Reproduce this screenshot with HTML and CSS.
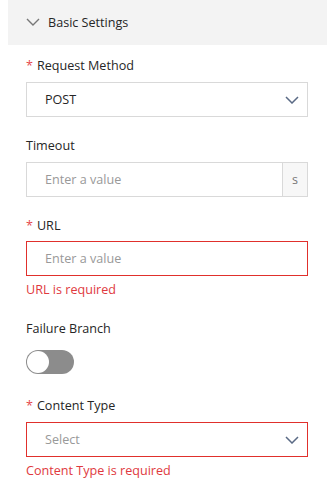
FILE: index.html
```html
<!DOCTYPE html>
<html lang="en">
<head>
    <meta charset="UTF-8">
    <meta name="viewport" content="width=device-width, initial-scale=1.0">
    <title>Basic Settings</title>
    <link rel="stylesheet" href="styles.css">
</head>
<body>
<div class="panel">
    <div class="panel-header">
        <svg class="collapse-icon" width="14" height="8" viewBox="0 0 14 8"><path d="M1 1 L7 7 L13 1" fill="none" stroke="#777" stroke-width="1.4"/></svg>
        <span>Basic Settings</span>
    </div>
    <div class="panel-body">
        <div class="form-item">
            <label class="form-label"><span class="required">*</span>Request Method</label>
            <div class="select">
                <span class="value">POST</span>
                <svg class="arrow" width="14" height="8" viewBox="0 0 14 8"><path d="M1 1 L7 7 L13 1" fill="none" stroke="#5a6a85" stroke-width="1.5"/></svg>
            </div>
        </div>
        <div class="form-item">
            <label class="form-label">Timeout</label>
            <div class="input-group">
                <input class="input" type="text" placeholder="Enter a value">
                <span class="addon">s</span>
            </div>
        </div>
        <div class="form-item has-error">
            <label class="form-label"><span class="required">*</span>URL</label>
            <input class="input" type="text" placeholder="Enter a value">
            <div class="error-msg">URL is required</div>
        </div>
        <div class="form-item switch-item">
            <label class="form-label">Failure Branch</label>
            <div class="switch"><span class="knob"></span></div>
        </div>
        <div class="form-item has-error">
            <label class="form-label"><span class="required">*</span>Content Type</label>
            <div class="select">
                <span class="placeholder">Select</span>
                <svg class="arrow" width="14" height="8" viewBox="0 0 14 8"><path d="M1 1 L7 7 L13 1" fill="none" stroke="#5a6a85" stroke-width="1.5"/></svg>
            </div>
            <div class="error-msg">Content Type is required</div>
        </div>
    </div>
</div>
</body>
</html>
```

FILE: styles.css
```css
body {
    margin: 0;
    padding: 0 8px;
    background: #fff;
    font-family: 'Open Sans', 'Noto Sans', sans-serif;
    font-size: 12.6px;
    color: #262626;
}

.panel-header {
    display: flex;
    align-items: center;
    height: 45px;
    background-color: #f3f3f3;
    padding-left: 18px;
}

.collapse-icon {
    margin-right: 8px;
    margin-top: -2px;
}

.panel-body {
    padding: 11px 19px 0 18px;
}

.form-item {
    margin-bottom: 19px;
}

.form-label {
    display: block;
    line-height: 20px;
    margin-bottom: 6px;
}

.required {
    color: #e5484d;
    margin-right: 4px;
}

.select {
    display: flex;
    align-items: center;
    justify-content: space-between;
    height: 35px;
    box-sizing: border-box;
    border: 1px solid #d9d9d9;
    padding: 0 8px 0 18px;
}

.select .placeholder {
    color: #999;
}

.input-group {
    display: flex;
    height: 35px;
    box-sizing: border-box;
    border: 1px solid #d9d9d9;
}

.input {
    display: block;
    width: 100%;
    height: 35px;
    box-sizing: border-box;
    border: 1px solid #d9d9d9;
    padding: 0 18px;
    font-family: inherit;
    font-size: inherit;
    color: #333;
    outline: none;
}

.input::placeholder {
    color: #999;
}

.input-group .input {
    border: none;
    height: 33px;
    flex: 1;
}

.addon {
    width: 24px;
    border-left: 1px solid #d9d9d9;
    background-color: #f7f7f7;
    color: #777;
    display: flex;
    align-items: center;
    justify-content: center;
}

.has-error .input,
.has-error .select {
    border-color: #e0302c;
}

.has-error .form-label {
    margin-bottom: 5px;
}

.error-msg {
    color: #e0393e;
    line-height: 20px;
    margin-top: 4px;
}

.switch-item {
    margin-bottom: 22px;
}

.switch-item .form-label {
    margin-bottom: 11px;
}

.has-error:last-child .form-label {
    margin-bottom: 6px;
}

.switch {
    position: relative;
    width: 48px;
    height: 24px;
    border-radius: 12px;
    background-color: #8c8c8c;
}

.switch .knob {
    position: absolute;
    top: 1px;
    left: 1px;
    width: 22px;
    height: 22px;
    border-radius: 50%;
    background: #fff;
}
```
